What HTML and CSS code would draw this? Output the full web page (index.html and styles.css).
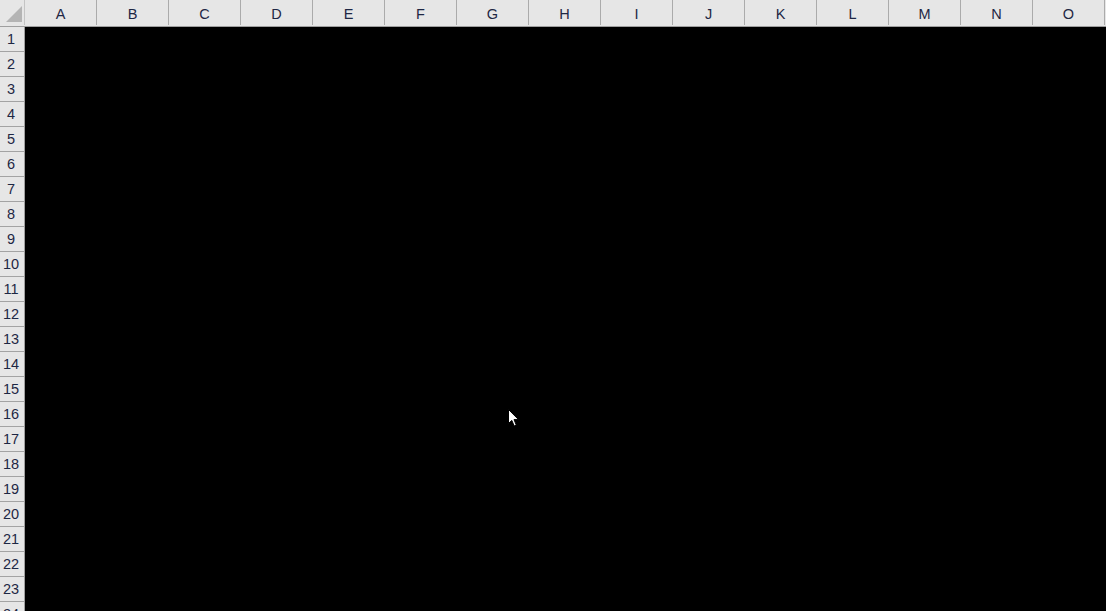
FILE: index.html
```html
<!DOCTYPE html>
<html lang="ja">
<head>
<meta charset="utf-8">
<title>Sheet</title>
<link rel="stylesheet" href="styles.css">
</head>
<body>
<div class="sheet">
  <div class="colhead">
    <div class="corner">
      <svg class="corner-tri" width="24" height="25" viewBox="0 0 24 25"><polygon points="6,22 22,6 22,22" fill="#b4b4b4"/></svg>
    </div>
    <div class="col">A</div><div class="col">B</div><div class="col">C</div><div class="col">D</div><div class="col">E</div><div class="col">F</div><div class="col">G</div><div class="col">H</div><div class="col">I</div><div class="col">J</div><div class="col">K</div><div class="col">L</div><div class="col">M</div><div class="col">N</div><div class="col">O</div>
    <div class="col-fill"></div>
  </div>
  <div class="body">
    <div class="rowhead">
      <div class="row">1</div><div class="row">2</div><div class="row">3</div><div class="row">4</div><div class="row">5</div><div class="row">6</div><div class="row">7</div><div class="row">8</div><div class="row">9</div><div class="row">10</div><div class="row">11</div><div class="row">12</div><div class="row">13</div><div class="row">14</div><div class="row">15</div><div class="row">16</div><div class="row">17</div><div class="row">18</div><div class="row">19</div><div class="row">20</div><div class="row">21</div><div class="row">22</div><div class="row">23</div><div class="row">24</div>
    </div>
    <div class="cells"></div>
  </div>
  <svg class="cursor" width="12" height="19" viewBox="0 0 12 19">
    <path d="M0.5 0.5 L0.5 14.5 L3.8 11.4 L6.2 17 L8.3 16.1 L6 10.6 L10.5 10.6 Z" fill="#fff" stroke="#000" stroke-width="1"/>
  </svg>
</div>
</body>
</html>
```

FILE: styles.css
```css
html, body {
  margin: 0;
  padding: 0;
  width: 1106px;
  height: 611px;
  overflow: hidden;
  background: #000;
}

.sheet {
  position: relative;
  width: 1106px;
  height: 611px;
  display: flex;
  flex-direction: column;
  font-family: "Liberation Sans", "Noto Sans CJK JP", sans-serif;
  font-size: 14.5px;
  color: #1e2744;
}

.colhead {
  display: flex;
  height: 25px;
  padding-bottom: 1px;
  border-bottom: 1px solid #9f9f9f;
  background: #e6e6e6;
  flex: none;
}

.corner {
  width: 24px;
  height: 25px;
  border-right: 1px solid #c4c4c4;
  flex: none;
}

.corner-tri {
  display: block;
}

.col {
  width: 72px;
  height: 25px;
  border-right: 1px solid #ababab;
  display: flex;
  align-items: center;
  justify-content: center;
  flex: none;
  padding-top: 2px;
  box-sizing: border-box;
}

.col-fill {
  flex: 1;
}

.body {
  display: flex;
  flex: 1;
  min-height: 0;
}

.rowhead {
  width: 24px;
  border-right: 1px solid #9f9f9f;
  background: #e6e6e6;
  flex: none;
  display: flex;
  flex-direction: column;
}

.row {
  height: 24px;
  border-bottom: 1px solid #a3a3a3;
  display: flex;
  align-items: center;
  justify-content: center;
  padding-right: 2px;
  flex: none;
}

.cells {
  flex: 1;
  background: #000;
}

.cursor {
  position: absolute;
  left: 508px;
  top: 409px;
}
```
